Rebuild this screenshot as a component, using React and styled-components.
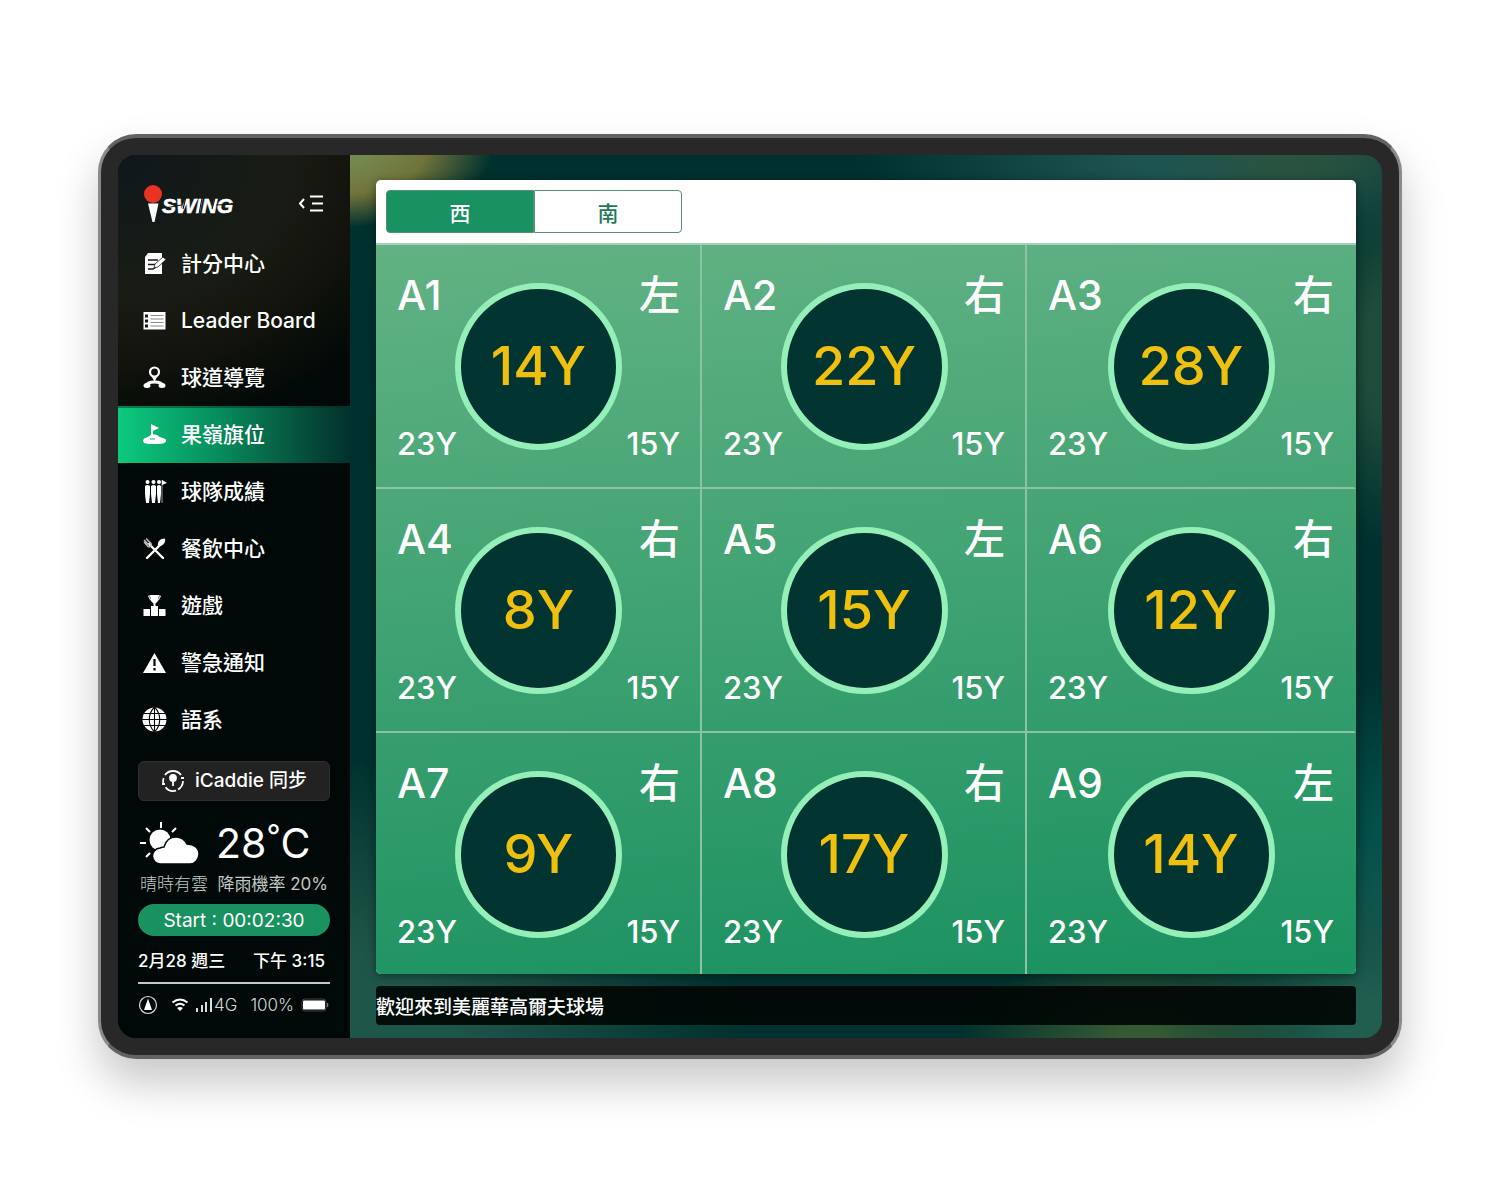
import React from 'react';
import styled, { createGlobalStyle, css } from 'styled-components';

const GlobalStyle = createGlobalStyle`
  * {
    box-sizing: border-box;
  }
  body {
    margin: 0;
    background: #fff;
    font-family: Inter, 'Noto Sans CJK TC', sans-serif;
    color: #fff;
  }
  button {
    font-family: inherit;
    color: inherit;
    cursor: pointer;
  }
`;

const Page = styled.div`
  min-height: 100vh;
  padding: 134px 98px 141px;
`;

const Tablet = styled.div`
  padding: 17px;
  border: 4px solid #626262;
  border-left: 3px solid #8a8a8a;
  border-right: 3px solid #8a8a8a;
  border-radius: 38px;
  background: #282828;
  box-shadow: 0 24px 44px rgba(0, 0, 0, 0.22);
`;

const Screen = styled.div`
  display: flex;
  overflow: hidden;
  border-radius: 18px;
  background:
    radial-gradient(ellipse 160px 78px at 215px -5px, #74894f 20%, #70733a 58%, transparent 100%),
    radial-gradient(ellipse 130px 70px at 1180px 0, rgba(45, 84, 60, 0.8) 20%, transparent 100%),
    radial-gradient(ellipse 340px 110px at 1080px 0, #1e5450 20%, transparent 100%),
    radial-gradient(ellipse 60px 190px at 100% 200px, #1c4c3a 30%, transparent 100%),
    radial-gradient(ellipse 180px 90px at 1020px 100%, #365a34 10%, transparent 100%),
    radial-gradient(ellipse 210px 200px at 100% 100%, #215e50 20%, transparent 100%),
    radial-gradient(ellipse 60px 180px at 100% 700px, #04504a 20%, transparent 100%),
    radial-gradient(ellipse 430px 280px at 200px 100%, #1f564a 30%, transparent 100%),
    #00312e;
`;

const Sidebar = styled.aside`
  display: flex;
  flex: none;
  flex-direction: column;
  width: 232px;
  background:
    radial-gradient(ellipse 380px 320px at 0 0, #10181c 0%, #191c14 45%, #12130c 65%, #000907 88%),
    #000907;
`;

const SidebarTop = styled.div`
  display: flex;
  align-items: center;
  justify-content: space-between;
  height: 80px;
  padding: 17px 26px 0;
`;

const CollapseButton = styled.button`
  display: flex;
  padding: 0;
  border: 0;
  background: none;
`;

const Menu = styled.nav`
  display: flex;
  flex-direction: column;
`;

const MenuItem = styled.a`
  display: flex;
  align-items: center;
  gap: 14px;
  height: 57px;
  padding: 0 24px;
  color: #fff;
  font-size: 21px;
  font-weight: 500;
  line-height: 28px;
  white-space: nowrap;
  text-decoration: none;
  ${({ $active }) =>
    $active &&
    css`
      background: linear-gradient(90deg, #0cca7d, #078f5e 42%, #054f3b 80%, #02312d);
      box-shadow: inset 0 2px 0 rgba(0, 50, 40, 0.5);
    `}
`;

const SidebarBottom = styled.div`
  display: flex;
  flex-direction: column;
  padding: 13px 20px 11px;
`;

const SyncButton = styled.button`
  display: flex;
  align-items: center;
  justify-content: center;
  gap: 10px;
  height: 40px;
  padding: 0;
  border: 1px solid #303030;
  border-radius: 6px;
  background: #222;
  font-size: 19px;
  font-weight: 500;
  line-height: 36px;
`;

const Weather = styled.div`
  display: flex;
  align-items: center;
  gap: 16px;
  height: 50px;
  margin-top: 17px;
  padding-left: 2px;
`;

const Temperature = styled.span`
  font-size: 41px;
  line-height: 52px;
`;

const Degree = styled.sup`
  font-size: 31px;
  line-height: 0;
  vertical-align: 11px;
`;

const WeatherText = styled.div`
  display: flex;
  justify-content: space-between;
  height: 24px;
  margin-top: 4px;
  padding: 0 2px;
  color: #c3c7c6;
  font-size: 17px;
  font-weight: 300;
  line-height: 24px;
  white-space: nowrap;
`;

const RainChance = styled.span`
  font-family: Inter, 'Noto Sans CJK TC', sans-serif;
  font-size: 17px;
  font-weight: 400;
`;

const Timer = styled.div`
  height: 32px;
  margin-top: 8px;
  border-radius: 16px;
  background: #1a9160;
  font-size: 19px;
  line-height: 34px;
  text-align: center;
`;

const DateRow = styled.div`
  display: flex;
  justify-content: space-between;
  height: 48px;
  padding-right: 5px;
  border-bottom: 2px solid #c4c8c6;
  font-size: 17px;
  font-weight: 500;
  line-height: 50px;
  white-space: nowrap;
`;

const StatusRow = styled.div`
  display: flex;
  align-items: center;
  justify-content: space-between;
  height: 42px;
  color: #d5d8d7;
  font-size: 17px;
  font-weight: 300;
`;

const StatusGroup = styled.span`
  display: flex;
  align-items: center;
  gap: ${({ $tight }) => ($tight ? '0' : '7px')};
`;

const Main = styled.main`
  display: flex;
  flex: 1;
  flex-direction: column;
  gap: 12px;
  min-width: 0;
  padding: 25px 26px 13px;
`;

const Board = styled.section`
  overflow: hidden;
  border-radius: 5px;
  background: #fff;
  box-shadow: 0 2px 10px rgba(0, 0, 0, 0.4);
`;

const Tabs = styled.div`
  display: flex;
  height: 63px;
  padding: 10px;
`;

const Tab = styled.button`
  width: 148px;
  height: 43px;
  padding: 0;
  border: 1px solid #579078;
  border-radius: ${({ $active }) => ($active ? '4px 0 0 4px' : '0 4px 4px 0')};
  background: ${({ $active }) => ($active ? '#1a9160' : '#fff')};
  color: ${({ $active }) => ($active ? '#fff' : '#1f7a56')};
  font-family: 'Noto Sans CJK TC', sans-serif;
  font-size: 21px;
  font-weight: 500;
  line-height: 38px;
`;

const HoleGrid = styled.div`
  display: grid;
  grid-template-columns: minmax(0, 326fr) minmax(0, 325fr) minmax(0, 329fr);
  grid-template-rows: 244px 244px 241px;
  border-top: 2px solid #a4d2b9;
  background: linear-gradient(175deg, #62b283, #1a9160);
`;

const HoleCard = styled.article`
  display: grid;
  grid-template-columns: minmax(0, 1fr) auto minmax(0, 1fr);
  grid-template-rows: 96px 96px;
  align-content: start;
  padding: 25px 20px 0 21px;
  border-right: 2px solid ${({ $last }) => ($last ? 'transparent' : '#8bc4a5')};
  border-bottom: ${({ $bottom }) => ($bottom ? '0' : '2px solid #8bc4a5')};
`;

const HoleName = styled.h2`
  margin: 0;
  font-size: 41px;
  font-weight: 500;
  line-height: 51px;
`;

const Side = styled.span`
  font-size: 41px;
  font-weight: 500;
  line-height: 51px;
  text-align: right;
`;

const Circle = styled.div`
  grid-row: 1 / 3;
  grid-column: 2;
  align-self: center;
  width: 167px;
  height: 167px;
  border: 6px solid #94efb9;
  border-radius: 50%;
  background: #023531;
  color: #f0c010;
  font-size: 54px;
  font-weight: 500;
  line-height: 154px;
  text-align: center;
`;

const Distance = styled.span`
  display: flex;
  align-items: flex-end;
  justify-content: ${({ $right }) => ($right ? 'flex-end' : 'flex-start')};
  font-size: 31px;
  font-weight: 500;
  line-height: 36px;
`;

const Marquee = styled.div`
  height: 39px;
  overflow: hidden;
  border-radius: 4px;
  background: rgba(0, 5, 3, 0.9);
  font-family: 'Noto Sans CJK TC', sans-serif;
  font-size: 19px;
  font-weight: 500;
  line-height: 40px;
  white-space: nowrap;
`;

const Logo = () => (
  <svg width="98" height="38" viewBox="0 0 98 38" aria-label="iSWING">
    <circle cx="9" cy="9" r="9" fill="#ea3323" />
    <path d="M4 18.500h10.500L10.500 37h-2z" fill="#fff" />
    <text
      x="18"
      y="28"
      fill="#fff"
      stroke="#fff"
      strokeWidth="0.6"
      fontFamily="Liberation Sans"
      fontSize="21"
      fontStyle="italic"
      fontWeight="700"
    >
      SWING
    </text>
    <path d="M24 22.500l13-2.500M42 12l-3 12M58 13l-3 16M71 13l-3 11M72 20l20-1" stroke="#151a17" strokeWidth="1.100" />
  </svg>
);

const CollapseIcon = () => (
  <svg width="26" height="18" viewBox="0 0 26 18" fill="none" stroke="#fff" strokeWidth="2">
    <path d="M6 4L2 8.500 6 13M12 1.500h13M14 8.500h11M12 15.500h13" />
  </svg>
);

const Icon = ({ children }) => (
  <svg width="25" height="25" viewBox="0 0 25 25" fill="#fff" aria-hidden="true">
    {children}
  </svg>
);

const icons = {
  score: (
    <>
      <path d="M6 2h14v21H3V6z" />
      <path d="M6 9h10M6 13.500h7M6 18h5l3-2" fill="none" stroke="#151a14" strokeWidth="1.400" />
      <path d="M12 17l1-4 8-7 3 2.500-8 7.500z" stroke="#151a14" strokeWidth="0.800" />
    </>
  ),
  board: (
    <>
      <path d="M1.500 4h22v17.500h-22z" />
      <path d="M3 6.500h3v3H3zM3 11.500h3v3H3zM3 16.500h3v3H3z" fill="#14170f" />
      <path d="M8.500 7.500h13M8.500 11h13M8.500 14.500h13M8.500 18h13" stroke="#888" strokeWidth="1" />
    </>
  ),
  guide: (
    <>
      <circle cx="12.500" cy="7" r="4.500" fill="none" stroke="#fff" strokeWidth="2.200" />
      <path d="M9.500 11h6l-3 6z" />
      <path d="M4 21q1-4 8.500-4t8.500 4" fill="none" stroke="#fff" strokeWidth="3" />
      <ellipse cx="5" cy="20.500" rx="3.500" ry="2.500" />
      <ellipse cx="20" cy="20.500" rx="3.500" ry="2.500" />
    </>
  ),
  flag: (
    <>
      <path d="M9 2l8 4-6 3v8H9z" />
      <path d="M1 18.500C2 15 6 16 8 13.500c2-1.500 7-1.500 9 1 2 2 7 1 7 4s-4 3.500-11.500 3.500S1 22 1 18.500z" />
      <path d="M8 17h5" stroke="#12b575" strokeWidth="1" />
    </>
  ),
  team: (
    <>
      <circle cx="5.500" cy="3" r="2" />
      <circle cx="11.500" cy="3" r="2" />
      <circle cx="17" cy="3" r="2" />
      <path d="M3 7q2.500-2 5 0v8l-1 9H4l-1-9zM9 7q2.500-2 5 0v8l-1 9h-3l-1-9zM15 7q2-2 4 0v8l-1 9h-2l-1-9z" />
      <path d="M20 1v23" stroke="#999" strokeWidth="1" />
      <path d="M20 1l5 3-5 2z" />
    </>
  ),
  food: (
    <>
      <path d="M7 8l14 14M18 9L5 22" stroke="#fff" strokeWidth="2.400" strokeLinecap="round" />
      <path d="M16 10c-1-4 2-7.500 7-7.500C24 7 20 11 16 10z" />
      <path d="M2 4l5 5M4 2.500l5 5c1 2-1 4-3 3L2 6" fill="none" stroke="#bbb" strokeWidth="1.500" />
    </>
  ),
  game: (
    <>
      <path d="M8 2h9l-1 6-2.500 2.500V13H16v10H9V13h2.500v-2.500L9 8z" />
      <path d="M6.500 3h12l-2 4h-8z" fill="none" stroke="#fff" />
      <path d="M1.500 16H8v7H1.500zM17 16h6.500v7H17z" />
    </>
  ),
  alert: (
    <>
      <path d="M12.500 3L24 23H1z" strokeLinejoin="round" />
      <path d="M12.500 9v7M12.500 18v2.500" stroke="#000907" strokeWidth="2.200" />
    </>
  ),
  globe: (
    <>
      <circle cx="12.500" cy="12.500" r="12" />
      <path
        d="M12.500 0v25M0 12.500h25M2 6.500h21M2 18.500h21M12.500 0c-7 7-7 18 0 25M12.500 0c7 7 7 18 0 25"
        fill="none"
        stroke="#000907"
        strokeWidth="1.100"
      />
    </>
  ),
};

const SyncIcon = () => (
  <svg width="24" height="24" viewBox="0 0 24 24" fill="none" stroke="#fff" strokeWidth="1.800">
    <path d="M4 6a10 10 0 0 1 16 0M22 12a10 10 0 0 1-5 8.500M15 21.700a10 10 0 0 1-10.500-3.500M2.200 14a10 10 0 0 1 .5-5" />
    <path d="M20 9h3M1 15h3" />
    <circle cx="12" cy="9" r="3" fill="#fff" />
    <path d="M12 10v7" />
  </svg>
);

const WeatherIcon = () => (
  <svg width="60" height="44" viewBox="0 0 60 44">
    <path d="M21 1v6M6 7l4 4M0 22h6M6 36l4-4M36 7l-4 4" stroke="#fff" strokeWidth="2" />
    <circle cx="20" cy="19" r="10.500" fill="#fff" />
    <path
      d="M21 43a8 8 0 0 1-1-16c2-1 3-1 4-1 2-7 7-10 12-10 6 0 9 3 11 7 7 0 12 4 12 10 0 5-4 10-9 10z"
      fill="#fff"
      stroke="#010a08"
      strokeWidth="1.500"
    />
  </svg>
);

const LocationIcon = () => (
  <svg width="20" height="20" viewBox="0 0 20 20">
    <circle cx="10" cy="10" r="8.500" fill="none" stroke="#ddd" strokeWidth="1.200" />
    <path d="M10 3.500L14 15H6z" fill="#fff" />
  </svg>
);

const WifiIcon = () => (
  <svg width="18" height="14" viewBox="0 0 18 14" fill="none" stroke="#fff" strokeWidth="2">
    <path d="M1.500 4.500q7.500-6 15 0M4.500 7.500q4.500-3.500 9 0" />
    <path d="M9 13L6 10q3-2 6 0z" fill="#fff" stroke="none" />
  </svg>
);

const SignalIcon = () => (
  <svg width="18" height="14" viewBox="0 0 18 14" fill="#ddd">
    <path d="M0 10h2v4H0zM5 7h2v7H5zM9 4h2v10H9zM14 0h2v14h-2z" />
  </svg>
);

const BatteryIcon = () => (
  <svg width="29" height="14" viewBox="0 0 29 14">
    <rect x="1" y="1" width="24" height="12" rx="3" fill="none" stroke="#444" />
    <rect x="2" y="2.500" width="22" height="9" rx="1" fill="#fff" />
    <path d="M26.500 5v4" stroke="#777" strokeWidth="1.500" />
  </svg>
);

const menu = [
  { icon: 'score', label: '計分中心' },
  { icon: 'board', label: 'Leader Board' },
  { icon: 'guide', label: '球道導覽' },
  { icon: 'flag', label: '果嶺旗位', active: true },
  { icon: 'team', label: '球隊成績' },
  { icon: 'food', label: '餐飲中心' },
  { icon: 'game', label: '遊戲' },
  { icon: 'alert', label: '警急通知' },
  { icon: 'globe', label: '語系' },
];

const holes = [
  { name: 'A1', side: '左', center: '14Y' },
  { name: 'A2', side: '右', center: '22Y' },
  { name: 'A3', side: '右', center: '28Y' },
  { name: 'A4', side: '右', center: '8Y' },
  { name: 'A5', side: '左', center: '15Y' },
  { name: 'A6', side: '右', center: '12Y' },
  { name: 'A7', side: '右', center: '9Y' },
  { name: 'A8', side: '右', center: '17Y' },
  { name: 'A9', side: '左', center: '14Y' },
];

class App extends React.Component {
  state = { course: '西' };

  renderHole = (hole, index) => (
    <HoleCard key={hole.name} $last={index % 3 === 2} $bottom={index > 5}>
      <HoleName>{hole.name}</HoleName>
      <Circle>{hole.center}</Circle>
      <Side>{hole.side}</Side>
      <Distance>23Y</Distance>
      <Distance $right>15Y</Distance>
    </HoleCard>
  );

  render() {
    const { course } = this.state;
    return (
      <Page>
        <GlobalStyle />
        <Tablet>
          <Screen>
            <Sidebar>
              <SidebarTop>
                <Logo />
                <CollapseButton aria-label="collapse menu">
                  <CollapseIcon />
                </CollapseButton>
              </SidebarTop>
              <Menu>
                {menu.map((item) => (
                  <MenuItem key={item.icon} href={`#${item.icon}`} $active={item.active}>
                    <Icon>{icons[item.icon]}</Icon>
                    {item.label}
                  </MenuItem>
                ))}
              </Menu>
              <SidebarBottom>
                <SyncButton>
                  <SyncIcon />
                  iCaddie 同步
                </SyncButton>
                <Weather>
                  <WeatherIcon />
                  <Temperature>
                    28<Degree>°</Degree>C
                  </Temperature>
                </Weather>
                <WeatherText>
                  <span>晴時有雲</span>
                  <RainChance>降雨機率 20%</RainChance>
                </WeatherText>
                <Timer>Start : 00:02:30</Timer>
                <DateRow>
                  <span>2月28 週三</span>
                  <span>下午 3:15</span>
                </DateRow>
                <StatusRow>
                  <LocationIcon />
                  <StatusGroup>
                    <WifiIcon />
                    <StatusGroup $tight>
                      <SignalIcon />
                      4G
                    </StatusGroup>
                  </StatusGroup>
                  <StatusGroup>
                    100%
                    <BatteryIcon />
                  </StatusGroup>
                </StatusRow>
              </SidebarBottom>
            </Sidebar>
            <Main>
              <Board>
                <Tabs>
                  {['西', '南'].map((name) => (
                    <Tab
                      key={name}
                      $active={course === name}
                      onClick={() => this.setState({ course: name })}
                    >
                      {name}
                    </Tab>
                  ))}
                </Tabs>
                <HoleGrid>{holes.map(this.renderHole)}</HoleGrid>
              </Board>
              <Marquee>歡迎來到美麗華高爾夫球場</Marquee>
            </Main>
          </Screen>
        </Tablet>
      </Page>
    );
  }
}

export default App;
